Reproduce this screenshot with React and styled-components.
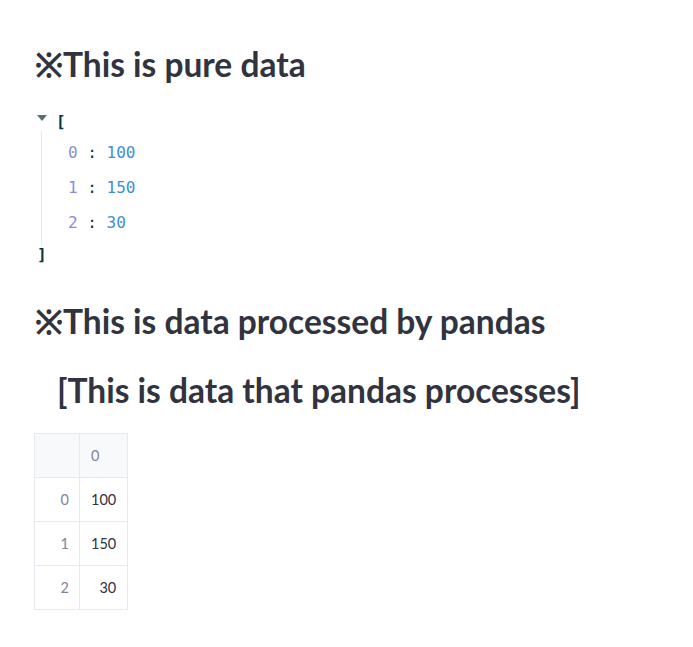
import styled, { createGlobalStyle } from "styled-components";

const GlobalStyle = createGlobalStyle`
  body {
    margin: 0;
    background: #ffffff;
    font-family: "Lato", "Liberation Sans", sans-serif;
    color: #31333f;
  }
`;

const Page = styled.div`
  padding: 40px 35px 30px 35px;
`;

const Heading = styled.h2`
  margin: 0;
  font-size: 33.5px;
  font-weight: 700;
  line-height: 48px;
  color: #31333f;
  padding-left: ${(props) => (props.indent ? "22px" : "0")};
  margin-top: ${(props) => props.top || 0}px;
`;

const Json = styled.div`
  font-family: "DejaVu Sans Mono", "Liberation Mono", monospace;
  font-size: 16px;
  margin-top: 23px;
`;

const JsonOpen = styled.div`
  display: flex;
  align-items: center;
  height: 20px;
  gap: 9px;
  font-weight: 700;
  color: #073642;
`;

const Caret = styled.span`
  width: 0;
  height: 0;
  border-left: 5px solid transparent;
  border-right: 5px solid transparent;
  border-top: 6px solid #586e75;
  margin-left: 2px;
  margin-top: -6px;
`;

const JsonBody = styled.div`
  margin-left: 6px;
  border-left: 1px solid #e8e8e8;
  padding: 12px 0 12px 26px;
  display: flex;
  flex-direction: column;
  gap: 15px;
`;

const JsonRow = styled.div`
  height: 20px;
  line-height: 20px;
  white-space: pre;
`;

const Key = styled.span`
  color: #8b8bd6;
`;

const Colon = styled.span`
  color: #073642;
`;

const Value = styled.span`
  color: #3d8fd6;
`;

const JsonClose = styled.div`
  font-weight: 700;
  color: #073642;
  margin-left: 2px;
  height: 20px;
  line-height: 20px;
`;

const Table = styled.table`
  border-collapse: collapse;
  margin-top: 19px;
  margin-left: -1px;
  font-family: "Lato", "Liberation Sans", sans-serif;
  font-size: 14.5px;
`;

const Cell = styled.td`
  border: 1px solid #e6e9ef;
  height: 43px;
  padding: 0 ${(props) => (props.index ? "10px" : "11px")};
  text-align: ${(props) => (props.head ? "left" : "right")};
  font-weight: 400;
  color: ${(props) => (props.index || props.head ? "#808495" : "#31333f")};
  background: ${(props) => (props.head ? "#f8f9fb" : "#ffffff")};
  min-width: 24px;
`;

const data = [100, 150, 30];

export default function App() {
  return (
    <>
      <GlobalStyle />
      <Page>
        <Heading>※This is pure data</Heading>
        <Json>
          <JsonOpen>
            <Caret />
            <span>[</span>
          </JsonOpen>
          <JsonBody>
            {data.map((v, i) => (
              <JsonRow key={i}>
                <Key>{i}</Key>
                <Colon> : </Colon>
                <Value>{v}</Value>
              </JsonRow>
            ))}
          </JsonBody>
          <JsonClose>]</JsonClose>
        </Json>
        <Heading top={32}>※This is data processed by pandas</Heading>
        <Heading indent top={21}>[This is data that pandas processes]</Heading>
        <Table>
          <thead>
            <tr>
              <Cell as="th" head index></Cell>
              <Cell as="th" head>
                0
              </Cell>
            </tr>
          </thead>
          <tbody>
            {data.map((v, i) => (
              <tr key={i}>
                <Cell index>{i}</Cell>
                <Cell>{v}</Cell>
              </tr>
            ))}
          </tbody>
        </Table>
      </Page>
    </>
  );
}
